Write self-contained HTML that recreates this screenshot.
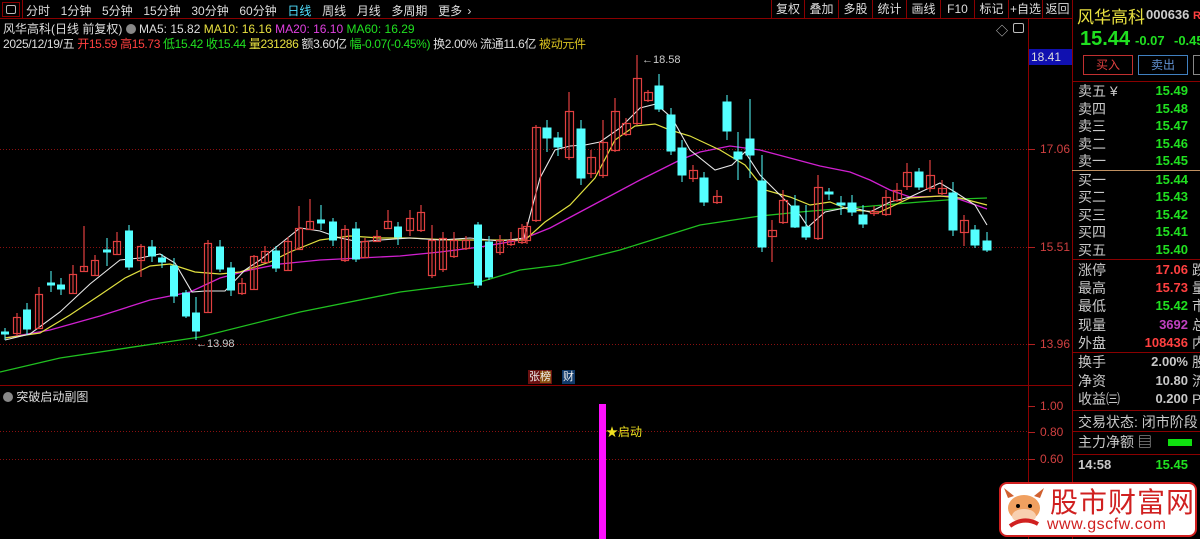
<!DOCTYPE html>
<html><head><meta charset="utf-8"><style>
*{margin:0;padding:0;box-sizing:border-box}
body{width:1200px;height:539px;background:#000;overflow:hidden;position:relative;font-family:"Liberation Sans","Noto Sans CJK SC",sans-serif;font-size:12px;color:#c8c8c8}
.a{position:absolute;white-space:nowrap}
.tb{position:absolute;top:0;height:19px;border-right:1px solid #8a0000;border-bottom:1px solid #8a0000;color:#ddd;font-size:12px;line-height:18px;text-align:center}
.r{color:#ff4040}.g{color:#20e020}.y{color:#e8e040}.m{color:#e040e0}.w{color:#ddd}
.rp .row{position:absolute;left:1078px;width:122px;height:18px;font-size:14px;line-height:18px}
.rp .row span{position:absolute}
.rp .row span.v{right:12px;text-align:right;font-weight:bold;font-size:13px}
.rp .row span.t{left:114px}
.hl{position:absolute;height:1px;background:#8a0000}
</style></head><body>
<div class="a" style="left:0;top:0;width:1072px;height:19px;border-bottom:1px solid #8a0000"></div>
<div class="a" style="left:2px;top:2px;width:18px;height:15px;border:1px solid #8a0000"></div>
<div class="a" style="left:6px;top:5px;width:10px;height:9px;border:1px solid #bbb;border-radius:2px"></div>
<div class="a" style="left:22px;top:0;width:1px;height:19px;background:#8a0000"></div>
<div class="a w" style="left:26px;top:2px;font-size:12px;word-spacing:2px">分时&nbsp; 1分钟&nbsp; 5分钟&nbsp; 15分钟&nbsp; 30分钟&nbsp; 60分钟&nbsp; <span style="color:#50e0ff">日线</span>&nbsp; 周线&nbsp; 月线&nbsp; 多周期&nbsp; 更多 ›</div>
<div class="tb" style="left:771px;width:34px;border-left:1px solid #8a0000">复权</div>
<div class="tb" style="left:805px;width:34px">叠加</div>
<div class="tb" style="left:839px;width:34px">多股</div>
<div class="tb" style="left:873px;width:34px">统计</div>
<div class="tb" style="left:907px;width:34px">画线</div>
<div class="tb" style="left:941px;width:34px">F10</div>
<div class="tb" style="left:975px;width:34px">标记</div>
<div class="tb" style="left:1009px;width:34px">+自选</div>
<div class="tb" style="left:1043px;width:30px">返回</div>
<div class="a w" style="left:3px;top:20px;font-size:12px">风华高科(日线 前复权) <span style="display:inline-block;width:10px;height:10px;border-radius:5px;background:#888;vertical-align:-1px"></span> MA5: 15.82 <span class="y">MA10: 16.16</span> <span class="m">MA20: 16.10</span> <span class="g">MA60: 16.29</span></div>
<div class="a w" style="left:3px;top:35px;font-size:12px;letter-spacing:-0.35px">2025/12/19/五 <span class="r">开15.59 高15.73</span> <span class="g">低15.42 收15.44</span> <span class="y">量231286</span> 额3.60亿 <span class="g">幅-0.07(-0.45%)</span> 换2.00% 流通11.6亿 <span style="color:#d8c020">被动元件</span></div>
<div class="a" style="left:996px;top:22px;color:#ccc;font-size:12px">◇</div>
<div class="a" style="left:1013px;top:23px;width:11px;height:10px;border:1px solid #bbb;border-radius:2px"></div>
<div class="a" style="left:1028px;top:19px;width:1px;height:520px;background:#8a0000"></div>
<div class="a" style="left:1072px;top:0;width:1px;height:539px;background:#8a0000"></div>
<div class="a" style="left:1029px;top:49px;width:43px;height:16px;background:#1010b0;color:#ddd;font-size:12px;line-height:16px;padding-left:2px">18.41</div>
<div class="a r" style="left:1040px;top:142px;color:#d04040">17.06</div>
<div class="a r" style="left:1040px;top:240px;color:#d04040">15.51</div>
<div class="a r" style="left:1040px;top:337px;color:#d04040">13.96</div>
<div class="hl" style="left:0;top:385px;width:1028px"></div>
<div class="hl" style="left:1028px;top:385px;width:44px"></div>
<div class="a" style="left:1040px;top:399px;color:#d04040">1.00</div>
<div class="a" style="left:1040px;top:425px;color:#d04040">0.80</div>
<div class="a" style="left:1040px;top:452px;color:#d04040">0.60</div>
<svg class="a" style="left:0;top:0" width="1072" height="539">
<g stroke="#8a1010" stroke-dasharray="1,2">
<line x1="0" y1="149.5" x2="1028" y2="149.5"/><line x1="0" y1="247.5" x2="1028" y2="247.5"/><line x1="0" y1="344.5" x2="1028" y2="344.5"/>
<line x1="0" y1="431.5" x2="1028" y2="431.5"/><line x1="0" y1="459.5" x2="1028" y2="459.5"/>
</g>
<g stroke="#b02020"><line x1="1028" y1="149.5" x2="1035" y2="149.5"/><line x1="1028" y1="247.5" x2="1035" y2="247.5"/><line x1="1028" y1="344.5" x2="1035" y2="344.5"/><line x1="1028" y1="406.5" x2="1035" y2="406.5"/><line x1="1028" y1="432.5" x2="1035" y2="432.5"/><line x1="1028" y1="459.5" x2="1035" y2="459.5"/></g>
<polyline fill="none" stroke="#20c020" stroke-width="1.3" points="0,372 60,358 200,337 300,312 400,292 480,282 520,270 560,265 620,250 700,225 760,216 800,212 860,207 920,202 960,199 987,198"/>
<polyline fill="none" stroke="#d020d0" stroke-width="1.3" points="5,338 50,330 100,316 150,300 190,292 220,278 250,270 280,264 320,260 360,258 400,256 440,252 480,247 520,240 550,228 580,212 610,196 640,180 660,170 680,160 700,152 730,146 760,150 790,158 820,166 850,172 870,180 890,190 910,197 950,196 970,203 987,209"/>
<polyline fill="none" stroke="#e0e040" stroke-width="1.2" points="5,338 40,333 70,315 100,295 125,278 150,266 170,264 195,272 220,274 240,272 270,262 290,252 320,240 350,236 380,238 410,238 450,240 490,240 525,240 545,222 570,205 595,178 615,140 635,126 655,124 670,130 690,136 720,150 745,165 765,190 790,197 810,205 830,202 850,210 880,212 910,198 940,196 960,198 987,205"/>
<polyline fill="none" stroke="#e8e8e8" stroke-width="1.1" points="5,340 30,334 60,312 90,284 120,260 140,258 160,254 175,263 192,292 205,291 225,291 245,270 260,260 280,244 300,228 320,231 340,238 360,242 380,240 410,238 440,240 470,238 500,241 524,238 540,178 555,150 570,146 585,145 600,142 620,128 640,108 656,104 672,118 690,150 715,170 732,165 745,152 760,175 780,195 800,215 808,227 825,212 850,207 870,212 890,202 910,197 940,183 955,192 975,205 987,225"/>
<g stroke="#e04040" fill="none" stroke-width="1.2">
<path d="M17,313V336M39,287V329M73,265V294M84,226V272M95,255V276M117,232V255M141,244V277M208,240V313M242,278V295M254,255V290M265,246V263M288,237V271M299,206V250M310,199V230M345,225V262M365,238V258M377,230V242M388,210V229M410,210V236M421,205V232M432,225V278M443,232V272M454,232V258M466,236V250M500,235V255M511,232V246M522,224V244M527,222V244M536,125V222M569,92V160M591,150V178M603,120V178M615,98V152M626,118V136M637,55V125M648,90V102M693,165V182M717,190V204M772,220V262M783,190V224M818,175V240M874,206V216M886,190V216M897,183V202M907,163V190M930,160V192M942,180V195M964,215V246"/>
<rect x="13.5" y="317.5" width="7" height="16"/><rect x="35.5" y="294.5" width="7" height="34"/><rect x="69.5" y="274.5" width="7" height="19"/><rect x="80.5" y="266.5" width="7" height="5"/><rect x="91.5" y="260.5" width="7" height="15"/><rect x="113.5" y="241.5" width="7" height="13"/><rect x="137.5" y="246.5" width="7" height="14"/><rect x="204.5" y="243.5" width="7" height="69"/><rect x="238.5" y="283.5" width="7" height="10"/><rect x="250.5" y="256.5" width="7" height="33"/><rect x="261.5" y="251.5" width="7" height="11"/><rect x="284.5" y="241.5" width="7" height="29"/><rect x="295.5" y="228.5" width="7" height="21"/><rect x="306.5" y="221.5" width="7" height="8"/><rect x="341.5" y="229.5" width="7" height="31"/><rect x="361.5" y="241.5" width="7" height="16"/><rect x="373.5" y="236.5" width="7" height="5"/><rect x="384.5" y="221.5" width="7" height="7"/><rect x="406.5" y="218.5" width="7" height="12"/><rect x="417.5" y="212.5" width="7" height="18"/><rect x="428.5" y="240.5" width="7" height="35"/><rect x="439.5" y="238.5" width="7" height="31"/><rect x="450.5" y="240.5" width="7" height="16"/><rect x="462.5" y="240.5" width="7" height="8"/><rect x="496.5" y="240.5" width="7" height="12"/><rect x="507.5" y="240.5" width="7" height="4"/><rect x="518.5" y="228.5" width="7" height="14"/><rect x="523.5" y="226.5" width="7" height="14"/><rect x="532.5" y="127.5" width="8" height="93"/><rect x="565.5" y="111.5" width="8" height="46"/><rect x="587.5" y="157.5" width="8" height="16"/><rect x="599.5" y="142.5" width="8" height="33"/><rect x="611.5" y="111.5" width="8" height="39"/><rect x="622.5" y="123.5" width="8" height="11"/><rect x="633.5" y="78.5" width="8" height="45"/><rect x="644.5" y="92.5" width="8" height="8"/><rect x="689.5" y="170.5" width="8" height="8"/><rect x="713.5" y="196.5" width="8" height="6"/><rect x="768.5" y="230.5" width="8" height="6"/><rect x="779.5" y="200.5" width="8" height="22"/><rect x="814.5" y="187.5" width="8" height="51"/><rect x="870.5" y="211.5" width="8" height="2"/><rect x="882.5" y="197.5" width="8" height="17"/><rect x="893.5" y="190.5" width="8" height="10"/><rect x="903.5" y="172.5" width="8" height="14"/><rect x="926.5" y="175.5" width="8" height="13"/><rect x="938.5" y="188.5" width="8" height="5"/><rect x="960.5" y="220.5" width="8" height="12"/>
</g>
<g fill="#54ffff" stroke="#54ffff" stroke-width="1">
<path d="M5,328V340M27,303V335M51,271V292M61,278V295M107,238V266M129,225V270M152,240V262M162,254V268M174,258V303M186,290V318M196,297V340M220,240V272M231,262V296M276,246V272M321,205V230M333,218V246M356,222V262M398,222V245M478,222V288M489,236V280M547,120V152M558,132V156M581,120V185M659,74V112M671,108V155M682,140V182M704,172V206M727,95V140M738,132V180M750,99V178M762,155V252M795,195V228M806,205V240M829,188V200M841,196V215M852,195V216M863,205V228M919,168V190M953,182V236M975,225V248M987,232V252"/>
<rect x="1.5" y="332" width="7" height="2"/><rect x="23.5" y="310" width="7" height="19"/><rect x="47.5" y="283" width="7" height="2"/><rect x="57.5" y="285" width="7" height="4"/><rect x="103.5" y="250" width="7" height="2"/><rect x="125.5" y="231" width="7" height="36"/><rect x="148.5" y="247" width="7" height="9"/><rect x="158.5" y="258" width="7" height="4"/><rect x="170.5" y="266" width="7" height="30"/><rect x="182.5" y="293" width="7" height="23"/><rect x="192.5" y="313" width="7" height="18"/><rect x="216.5" y="247" width="7" height="22"/><rect x="227.5" y="268" width="7" height="22"/><rect x="272.5" y="251" width="7" height="17"/><rect x="317.5" y="220" width="7" height="3"/><rect x="329.5" y="222" width="7" height="18"/><rect x="352.5" y="229" width="7" height="30"/><rect x="394.5" y="227" width="7" height="10"/><rect x="474.5" y="225" width="7" height="60"/><rect x="485.5" y="242" width="7" height="35"/><rect x="543" y="128" width="8" height="10"/><rect x="554" y="138" width="8" height="9"/><rect x="577" y="129" width="8" height="49"/><rect x="655" y="86" width="8" height="23"/><rect x="667" y="115" width="8" height="36"/><rect x="678" y="148" width="8" height="27"/><rect x="700" y="178" width="8" height="24"/><rect x="723" y="102" width="8" height="29"/><rect x="734" y="152" width="8" height="7"/><rect x="746" y="139" width="8" height="16"/><rect x="758" y="181" width="8" height="66"/><rect x="791" y="206" width="8" height="21"/><rect x="802" y="227" width="8" height="10"/><rect x="825" y="192" width="8" height="2"/><rect x="837" y="203" width="8" height="2"/><rect x="848" y="203" width="8" height="9"/><rect x="859" y="215" width="8" height="9"/><rect x="915" y="172" width="8" height="15"/><rect x="949" y="193" width="8" height="37"/><rect x="971" y="230" width="8" height="15"/><rect x="983" y="241" width="8" height="9"/>
</g>
<text x="642" y="63" fill="#ccc" font-size="11" font-family="Liberation Sans">←18.58</text>
<text x="196" y="347" fill="#ccc" font-size="11" font-family="Liberation Sans">←13.98</text>
<rect x="599" y="404" width="7" height="135" fill="#ff10ff"/>
</svg>
<div class="a" style="left:528px;top:370px;font-size:11px;background:#6a1010;color:#eee;padding:0 1px;line-height:14px">张<span style="background:#8a5010">榜</span></div>
<div class="a" style="left:562px;top:370px;font-size:11px;background:#103a6a;color:#eee;padding:0 1px;line-height:14px">财</div>
<div class="a" style="left:3px;top:388px;font-size:12px;color:#ddd"><span style="display:inline-block;width:10px;height:10px;border-radius:5px;background:#888;vertical-align:-1px"></span> 突破启动副图</div>
<div class="a y" style="left:606px;top:423px;font-size:12px;color:#f0e020">★启动</div>
<div class="rp">
<div class="a" style="left:1077px;top:3px;font-size:17px;color:#e8e040">风华高科</div>
<div class="a" style="left:1146px;top:7px;font-size:13px;font-weight:bold;color:#ccc">000636 <span class="r" style="font-size:11px">R</span></div>
<div class="a" style="left:1080px;top:28px;font-size:20px;font-weight:bold;color:#20e020">15.44</div>
<div class="a" style="left:1135px;top:33px;font-size:13px;font-weight:bold;color:#20e020">-0.07</div>
<div class="a" style="left:1174px;top:33px;font-size:13px;font-weight:bold;color:#20e020">-0.45</div>
<div class="a" style="left:1083px;top:55px;width:50px;height:20px;border:1px solid #c03030;color:#e04040;text-align:center;line-height:18px;font-size:12px">买入</div>
<div class="a" style="left:1138px;top:55px;width:50px;height:20px;border:1px solid #4080c0;color:#6090d0;text-align:center;line-height:18px;font-size:12px">卖出</div>
<div class="a" style="left:1193px;top:55px;width:10px;height:20px;border:1px solid #888"></div>
<div class="hl" style="left:1072px;top:81px;width:128px"></div>
<div class="row" style="top:82px"><span>卖五 ¥</span><span class="v g">15.49</span></div>
<div class="row" style="top:100px"><span>卖四</span><span class="v g">15.48</span></div>
<div class="row" style="top:117px"><span>卖三</span><span class="v g">15.47</span></div>
<div class="row" style="top:135px"><span>卖二</span><span class="v g">15.46</span></div>
<div class="row" style="top:152px"><span>卖一</span><span class="v g">15.45</span></div>
<div class="a" style="left:1072px;top:170px;width:128px;height:1px;background:#c09060"></div>
<div class="row" style="top:171px"><span>买一</span><span class="v g">15.44</span></div>
<div class="row" style="top:188px"><span>买二</span><span class="v g">15.43</span></div>
<div class="row" style="top:206px"><span>买三</span><span class="v g">15.42</span></div>
<div class="row" style="top:223px"><span>买四</span><span class="v g">15.41</span></div>
<div class="row" style="top:241px"><span>买五</span><span class="v g">15.40</span></div>
<div class="hl" style="left:1072px;top:259px;width:128px"></div>
<div class="row" style="top:261px"><span>涨停</span><span class="v r">17.06</span><span class="t">跌</span></div>
<div class="row" style="top:279px"><span>最高</span><span class="v r">15.73</span><span class="t">量</span></div>
<div class="row" style="top:297px"><span>最低</span><span class="v g">15.42</span><span class="t">市</span></div>
<div class="row" style="top:316px"><span>现量</span><span class="v" style="color:#c040c0">3692</span><span class="t">总</span></div>
<div class="row" style="top:334px"><span>外盘</span><span class="v r">108436</span><span class="t">内</span></div>
<div class="hl" style="left:1072px;top:352px;width:128px"></div>
<div class="row" style="top:353px"><span>换手</span><span class="v">2.00%</span><span class="t">股</span></div>
<div class="row" style="top:372px"><span>净资</span><span class="v">10.80</span><span class="t">流</span></div>
<div class="row" style="top:390px"><span>收益㈢</span><span class="v">0.200</span><span class="t">P</span></div>
<div class="hl" style="left:1072px;top:410px;width:128px"></div>
<div class="row" style="top:413px"><span>交易状态: 闭市阶段</span></div>
<div class="hl" style="left:1072px;top:431px;width:128px"></div>
<div class="row" style="top:433px"><span>主力净额 ▤</span></div>
<div class="a" style="left:1168px;top:439px;width:24px;height:7px;background:#10e010"></div>
<div class="hl" style="left:1072px;top:454px;width:128px"></div>
<div class="row" style="top:456px"><span style="font-weight:bold;font-size:13px">14:58</span><span class="v g">15.45</span></div>
</div>
<div class="a" style="left:999px;top:482px;width:198px;height:55px;background:#fff;border:2px solid #d02020;border-radius:8px"></div>
<div class="a" style="left:1002px;top:486px;width:44px;height:46px">
<svg width="44" height="46"><ellipse cx="22" cy="22" rx="16" ry="13" fill="#f0a060"/><ellipse cx="22" cy="30" rx="12" ry="7" fill="#f8d0b0"/><path d="M6,12 L2,2 L12,10Z M38,12 L42,2 L32,10Z" fill="#d06030"/><circle cx="16" cy="20" r="2" fill="#000"/><circle cx="28" cy="20" r="2" fill="#000"/><path d="M8,40 Q22,30 36,38" stroke="#d02020" stroke-width="4" fill="none"/></svg></div>
<div class="a" style="left:1050px;top:484px;font-size:28px;color:#d02020;font-family:'Noto Sans CJK SC',sans-serif;line-height:34px;letter-spacing:1px">股市财富网</div>
<div class="a" style="left:1047px;top:516px;font-size:16px;color:#d02020;font-family:'Liberation Sans',sans-serif;letter-spacing:0.5px">www.gscfw.com</div>
</body></html>
